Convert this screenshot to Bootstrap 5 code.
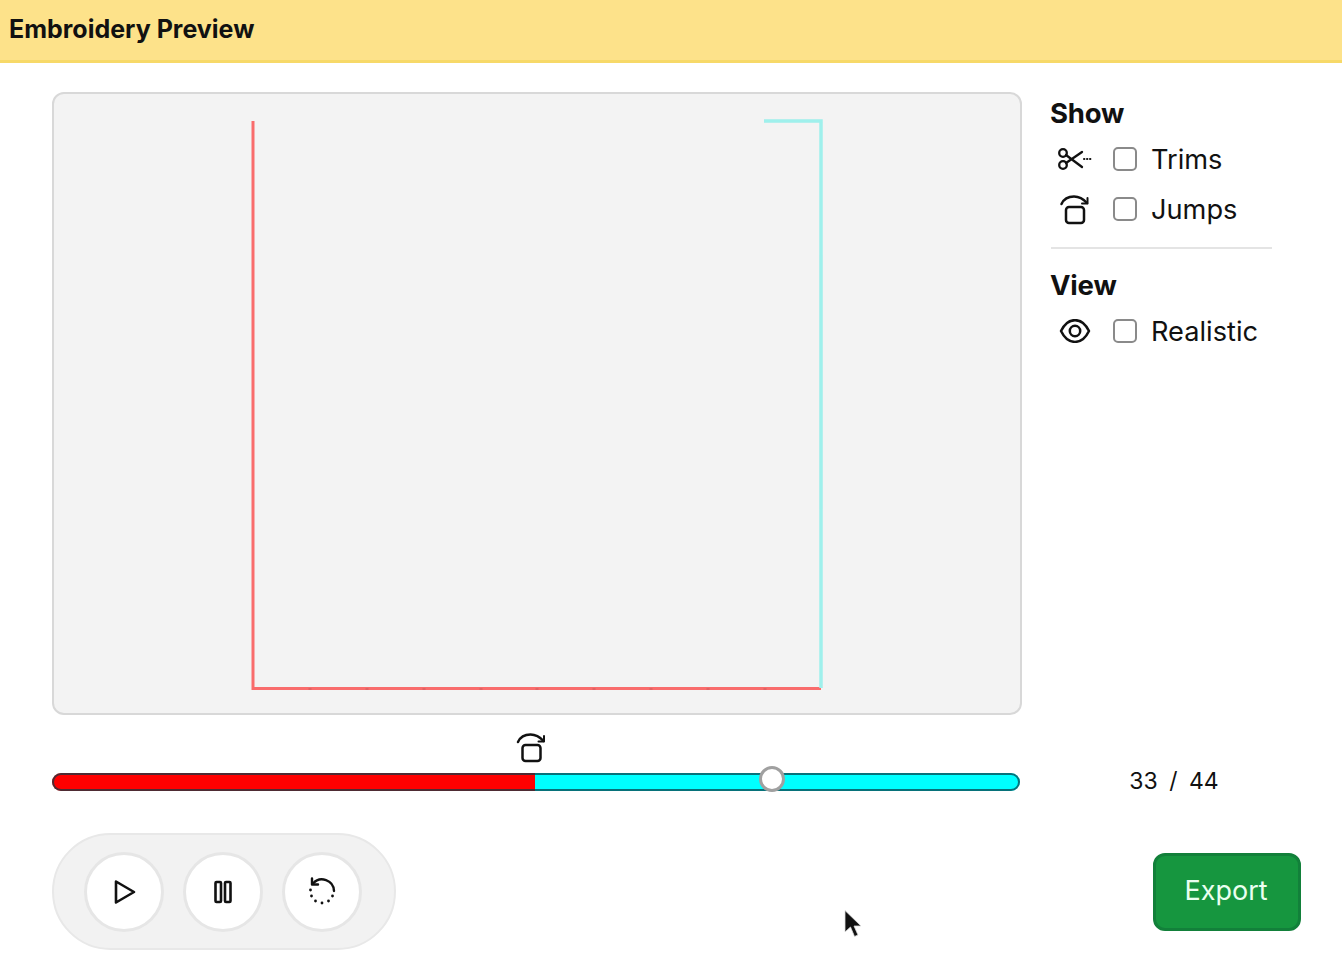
<!DOCTYPE html>
<html lang="en">
<head>
<meta charset="utf-8">
<title>Embroidery Preview</title>
<link href="https://cdn.jsdelivr.net/npm/bootstrap@5.3.0/dist/css/bootstrap.min.css" rel="stylesheet">
<style>
html,body{height:100%;}
body{font-family:Inter,"Liberation Sans",sans-serif;color:#111;background:#fff;overflow:hidden;position:relative;}
.top-strip{height:63px;background:#fde28a;border-bottom:3px solid #f7d968;padding-left:9px;padding-bottom:2px;}
.top-strip h1{font-size:25px;font-weight:700;margin:0;color:#111;}
.main-row{padding:29px 0 0 52px;}
.left-col{width:970px;}
.stage{height:623px;background:#f3f3f3;border:2px solid #d8d8d8;border-radius:12px;overflow:hidden;}
.stage svg{display:block;}
.side-col{width:221px;margin-left:29px;padding-top:4px;}
.side-col h2{font-size:27.5px;font-weight:700;line-height:34px;margin:0 0 4px -1px;letter-spacing:-.2px;}
.opt-row{height:50px;}
.opt-row .glyph{width:50px;margin-left:-1px;}
.opt-row .form-check-input{width:24px;height:24px;margin:0 14px 0 13px;border:2px solid #8a8a8a;border-radius:5px;flex:none;}
.opt-row label{font-size:27.2px;line-height:1;color:#111;padding-top:2px;}
.side-rule{border-top:2px solid #e4e4e4;margin:13px 0 19px;}
.slider-row{margin-top:58px;height:18px;width:1150px;}
.slider-wrap{width:968px;height:18px;}
.seq-range{display:block;width:100%;height:18px;margin:0;padding:0;appearance:none;-webkit-appearance:none;background:transparent;}
.seq-range::-webkit-slider-runnable-track{height:18px;border-radius:9px;background:linear-gradient(to right,#ff0000 49.9%,#00ffff 49.9%);box-shadow:inset 0 0 0 2px rgba(10,60,70,.72);}
.seq-range::-webkit-slider-thumb{-webkit-appearance:none;appearance:none;width:26px;height:26px;margin-top:-7px;background:#fff;border:3px solid #a0a0a0;border-radius:50%;}
.jump-mark{position:absolute;left:463px;top:-42px;}
.counter{font-size:23px;width:140px;margin:0 0 2px 84px;text-align:center;word-spacing:5px;}
.foot-row{margin:42px 0 0 52px;width:1249px;}
.pill-bar{width:344px;height:117px;background:#f2f2f2;border:2px solid #e8e8e8;border-radius:59px;padding-left:30px;gap:19px;}
.round-btn{width:80px;height:80px;background:#fff;border:3px solid #e6e6e6;border-radius:50%;padding:0;}
.export-btn{width:148px;height:78px;font-size:27px;background:#16963f;border:3px solid #12803a;border-radius:12px;color:#eafff0;padding:0 2px 0 0;}
.pointer{position:absolute;left:843px;top:909px;}
</style>
</head>
<body>
<header class="top-strip d-flex align-items-center">
  <h1>Embroidery Preview</h1>
</header>
<main class="main-row d-flex align-items-start">
  <div class="left-col flex-shrink-0">
    <div class="stage">
      <svg width="966" height="619" viewBox="0 0 966 619" aria-label="Stitch preview">
        <path d="M199 27V594.500H767" fill="none" stroke="#f96c6c" stroke-width="3"/>
        <path d="M256 594.500v1M313 594.500v1M370 594.500v1M427 594.500v1M483 594.500v1M540 594.500v1M597 594.500v1M654 594.500v1M711 594.500v1" stroke="#c75a5a" stroke-width="3" fill="none"/>
        <path d="M710 27H767V594" fill="none" stroke="#9ff0ec" stroke-width="3.500"/>
      </svg>
    </div>
    <div class="slider-row d-flex align-items-center">
      <div class="slider-wrap position-relative flex-shrink-0">
        <svg class="jump-mark" width="32" height="32" viewBox="0 0 32 32" fill="none" stroke="#111" stroke-width="2.500" stroke-linecap="round" stroke-linejoin="round"><rect x="7.500" y="14" width="18" height="16" rx="3"/><path d="M3 11C5.500 5.500 10.500 3.500 15.500 3.500 20.500 3.500 24.500 5.500 28.500 10"/><path d="M29 5V10.500H23.500" stroke-width="2"/></svg>
        <input class="seq-range" type="range" min="0" max="44" value="33" aria-label="Stitch position">
      </div>
      <div class="counter flex-shrink-0">33 / 44</div>
    </div>
  </div>
  <aside class="side-col flex-shrink-0">
    <h2>Show</h2>
    <div class="opt-row d-flex align-items-center">
      <span class="glyph d-flex justify-content-center">
        <svg width="36" height="28" viewBox="0 0 36 28" fill="none" stroke="#111" stroke-width="2.300" stroke-linecap="round"><circle cx="6" cy="8" r="3.800"/><circle cx="6" cy="20" r="3.800"/><path d="M9 10 25 22M9 18 25 7"/><path d="M27 14h.4M30 14h.4M33 14h.4" stroke-width="2"/></svg>
      </span>
      <input class="form-check-input" type="checkbox" id="optTrims">
      <label for="optTrims">Trims</label>
    </div>
    <div class="opt-row d-flex align-items-center">
      <span class="glyph d-flex justify-content-center">
        <svg width="32" height="32" viewBox="0 0 32 32" fill="none" stroke="#111" stroke-width="2.500" stroke-linecap="round" stroke-linejoin="round"><rect x="7" y="14" width="18" height="16" rx="3"/><path d="M2.500 11C5 5.500 10 3.500 15 3.500 20 3.500 24 5.500 28 10"/><path d="M28.500 5V10.500H23" stroke-width="2"/></svg>
      </span>
      <input class="form-check-input" type="checkbox" id="optJumps">
      <label for="optJumps">Jumps</label>
    </div>
    <div class="side-rule"></div>
    <h2>View</h2>
    <div class="opt-row d-flex align-items-center">
      <span class="glyph d-flex justify-content-center">
        <svg width="32" height="24" viewBox="0 0 32 24" fill="none" stroke="#111" stroke-width="2.500" stroke-linejoin="round"><path d="M2 12C9-2.500 23-2.500 30 12 23 26.500 9 26.500 2 12Z"/><circle cx="16" cy="12" r="5.200"/></svg>
      </span>
      <input class="form-check-input" type="checkbox" id="optReal">
      <label for="optReal">Realistic</label>
    </div>
  </aside>
</main>
<section class="foot-row d-flex justify-content-between align-items-center">
  <div class="pill-bar d-flex align-items-center">
    <button class="round-btn d-flex align-items-center justify-content-center" aria-label="Play">
      <svg width="28" height="28" viewBox="0 0 28 28" fill="none" stroke="#111" stroke-width="2.600" stroke-linejoin="round"><path d="M6 3.500 24 14 6 24.500Z"/></svg>
    </button>
    <button class="round-btn d-flex align-items-center justify-content-center" aria-label="Pause">
      <svg width="24" height="26" viewBox="0 0 24 26" fill="none" stroke="#111" stroke-width="2.600" stroke-linejoin="round"><rect x="4.500" y="3" width="5.500" height="20" rx="1"/><rect x="14" y="3" width="5.500" height="20" rx="1"/></svg>
    </button>
    <button class="round-btn d-flex align-items-center justify-content-center" aria-label="Restart">
      <svg width="32" height="32" viewBox="0 0 32 32" fill="none" stroke="#111" stroke-linecap="round" stroke-linejoin="round"><path d="M28 15A12 12 0 0 0 7 7.500" stroke-width="2.400"/><path d="M6 2.500V8.500H12" stroke-width="2.400"/><path d="M4.500 14v.1M5.500 20v.1M9.500 25v.1M16 27v.1M22.500 25v.1M26.500 20v.1" stroke-width="2.800"/></svg>
    </button>
  </div>
  <button class="export-btn btn d-flex align-items-center justify-content-center">Export</button>
</section>
<svg class="pointer" width="22" height="32" viewBox="0 0 22 32" aria-hidden="true"><path d="M2 1.500V23L7.500 18 11.500 27.500 15 26 11 17H18Z" fill="#111" stroke="#ddd" stroke-width=".8"/></svg>
</body>
</html>
